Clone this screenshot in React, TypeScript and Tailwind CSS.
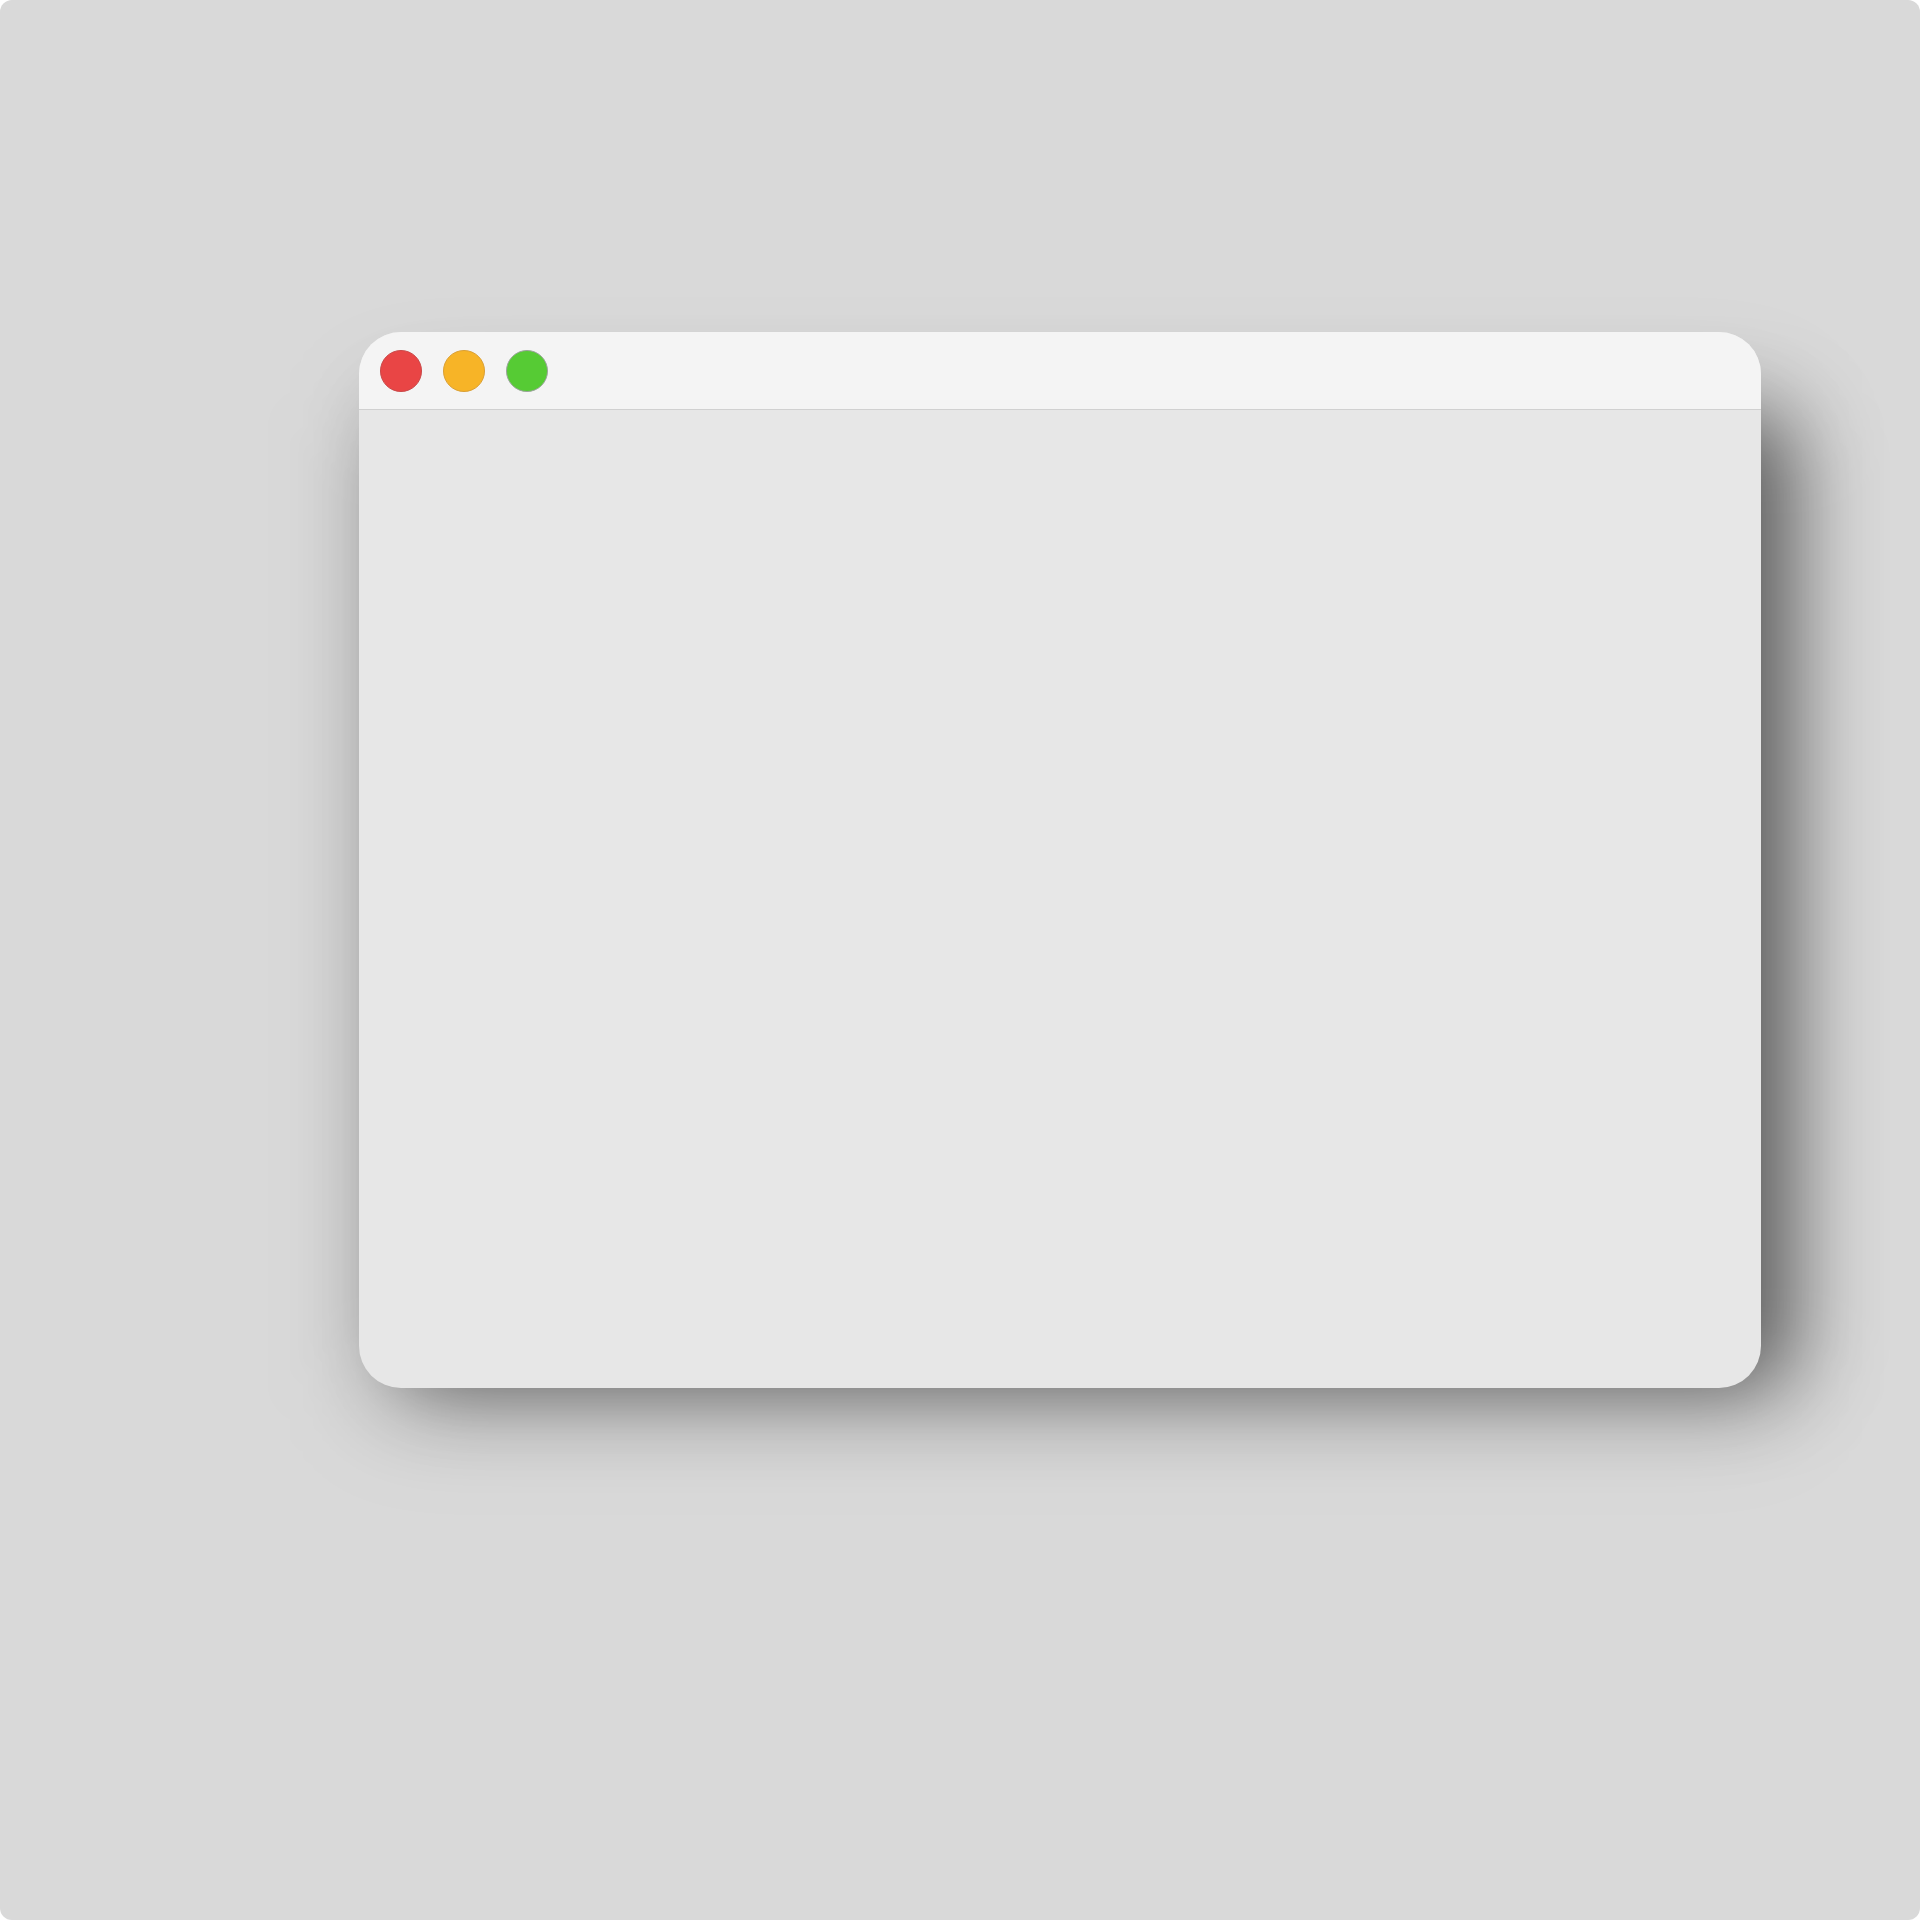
const controls = [
  { label: "Close", style: "bg-[#e94545] border-[#c94848]" },
  { label: "Minimize", style: "bg-[#f7b427] border-[#d99f35]" },
  { label: "Zoom", style: "bg-[#56cb34] border-[#9aa39a]" },
];

export default function App() {
  return (
    <div className="bg-white">
      <main className="grid min-h-screen grid-cols-[359fr_1402fr_159fr] grid-rows-[332fr_1056fr_532fr] overflow-hidden rounded-xl bg-[#d9d9d9]">
        <section aria-label="Window" className="relative isolate col-start-2 row-start-2 flex flex-col">
          <div
            aria-hidden="true"
            className="absolute -right-8 -bottom-9 left-0 top-14 -z-10 rounded-[40px] bg-black/8 blur-[50px]"
          />
          <div
            aria-hidden="true"
            className="absolute -right-8 -bottom-0.5 left-9 top-20 -z-10 rounded-[40px] bg-black/55 blur-[42px]"
          />
          <div className="flex flex-1 flex-col overflow-hidden rounded-[42px] bg-[#e7e7e7]">
            <header className="flex items-center gap-[21px] border-b border-[#d0d0d0] bg-[#f4f4f4] px-[21px] pt-[18px] pb-[17px]">
              {controls.map((c) => (
                <button
                  key={c.label}
                  type="button"
                  aria-label={c.label}
                  className={`size-[42px] rounded-full border ${c.style}`}
                />
              ))}
            </header>
            <div className="flex-1" />
          </div>
        </section>
      </main>
    </div>
  );
}
